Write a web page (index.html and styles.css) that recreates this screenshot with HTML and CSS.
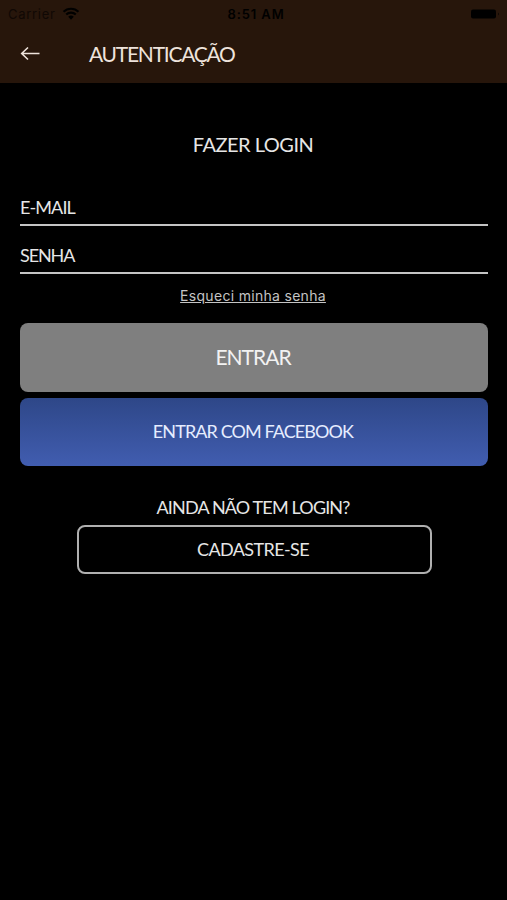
FILE: index.html
```html
<!DOCTYPE html>
<html lang="pt-BR">
<head>
    <meta charset="UTF-8">
    <meta name="viewport" content="width=device-width, initial-scale=1.0">
    <title>Autenticação</title>
    <link rel="stylesheet" href="styles.css">
</head>
<body>
    <header class="header">
        <div class="status-bar">
            <div class="carrier">
                <span>Carrier</span>
                <svg class="wifi" viewBox="0 0 18 13" width="18" height="13">
                    <path d="M1.5 4.8a10.6 10.6 0 0 1 15 0M4.2 7.6a6.8 6.8 0 0 1 9.6 0" fill="none" stroke="#000" stroke-width="2.1"/>
                    <path d="M6.2 9.8a4 4 0 0 1 5.6 0L9 12.7z"/>
                </svg>
            </div>
            <span class="clock">8:51 AM</span>
            <svg class="battery" viewBox="0 0 30 10" width="30" height="10">
                <rect x="0" y="0.5" width="25" height="9" rx="2"/>
                <path d="M27 3.5q1.6 1.5 0 3z"/>
            </svg>
        </div>
        <div class="nav-bar">
            <svg class="back" viewBox="0 0 20 16" width="20" height="16">
                <path d="M19.5 7.5H1.7M8 1.5L1.7 7.5L8 13.5" fill="none" stroke="#eee3dc" stroke-width="1.6"/>
            </svg>
            <h1 class="page-title">AUTENTICAÇÃO</h1>
        </div>
    </header>
    <main class="login">
        <h2 class="login-title">FAZER LOGIN</h2>
        <input class="field email" type="email" placeholder="E-MAIL">
        <input class="field password" type="password" placeholder="SENHA">
        <a class="forgot" href="#">Esqueci minha senha</a>
        <button class="btn btn-enter">ENTRAR</button>
        <button class="btn btn-facebook">ENTRAR COM FACEBOOK</button>
        <p class="question">AINDA NÃO TEM LOGIN?</p>
        <button class="btn btn-register">CADASTRE-SE</button>
    </main>
</body>
</html>
```
FILE: styles.css
```css
* {
    box-sizing: border-box;
}
body {
    margin: 0;
    min-height: 100vh;
    background: #000;
    color: #e6e6e6;
    font-family: Lato, sans-serif;
}
.header {
    height: 83px;
    background: #27160b;
}
.status-bar {
    display: grid;
    grid-template-columns: 1fr auto 1fr;
    align-items: center;
    height: 27px;
    padding: 0 6px 0 8px;
    color: #000;
    font-family: Inter, sans-serif;
    font-size: 13px;
}
.carrier {
    display: flex;
    align-items: center;
    gap: 6px;
    color: #100804;
    letter-spacing: 0.7px;
}
.clock {
    padding-left: 3px;
    font-weight: 600;
    letter-spacing: 0.9px;
}
.battery {
    justify-self: end;
}
.nav-bar {
    display: flex;
    align-items: center;
    height: 54px;
    padding-left: 20px;
}
.page-title {
    margin: 0 0 0 49px;
    color: #eee3dc;
    font-size: 21px;
    font-weight: 400;
    letter-spacing: -1.25px;
    line-height: 26px;
}
.login {
    display: flex;
    flex-direction: column;
    padding: 48px 19px 0 20px;
}
.login-title {
    margin: 0 2px 43px 0;
    font-size: 20px;
    font-weight: 400;
    letter-spacing: -0.5px;
    line-height: 26px;
    text-align: center;
}
.field {
    width: 100%;
    height: 26px;
    margin: 0 0 22px;
    padding: 0 0 10px 0;
    border: 0;
    border-bottom: 2px solid #c4c4c4;
    border-radius: 0;
    background: transparent;
    font-family: inherit;
    font-size: 18px;
    letter-spacing: -0.9px;
    color: #e6e6e6;
    outline: none;
}
.field::placeholder {
    color: #e6e6e6;
    opacity: 1;
}
.password {
    margin-bottom: 13px;
    letter-spacing: -1.1px;
}
.forgot {
    align-self: center;
    margin: 0 2px 18px 0;
    color: #c4c4c4;
    font-family: Inter, sans-serif;
    font-size: 14px;
    letter-spacing: 0.3px;
    line-height: 18px;
}
.btn {
    padding: 0 2px 2px 0;
    border: 0;
    border-radius: 8px;
    color: #f2f2f2;
    font-family: inherit;
}
.btn-enter {
    height: 69px;
    background: #7f7f7f;
    font-size: 21px;
    letter-spacing: -1px;
}
.btn-facebook {
    height: 68px;
    margin-top: 6px;
    background: linear-gradient(#2e4788, #415db0);
    color: #e6edff;
    font-size: 18px;
    letter-spacing: -0.9px;
}
.question {
    margin: 29px 2px 6px 0;
    font-size: 18px;
    letter-spacing: -0.85px;
    line-height: 24px;
    text-align: center;
}
.btn-register {
    align-self: center;
    width: 355px;
    height: 49px;
    border: 2px solid #b0b0b0;
    background: transparent;
    color: #e6e6e6;
    font-size: 18px;
    letter-spacing: -0.6px;
}
```
